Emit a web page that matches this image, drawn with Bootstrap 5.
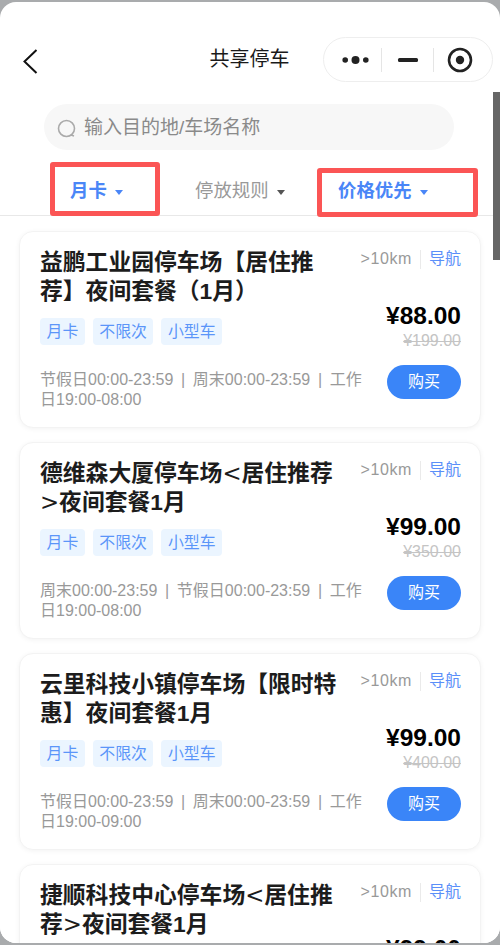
<!doctype html>
<html lang="zh"><head><meta charset="utf-8"><title>共享停车</title>
<link href="https://cdn.jsdelivr.net/npm/bootstrap@5.3.0/dist/css/bootstrap.min.css" rel="stylesheet">
<style>
html,body{height:945px;overflow:hidden;margin:0;background:#a9abad}
body{font-family:"Liberation Sans","Noto Sans CJK SC",sans-serif;padding-top:2px}
.phone{height:941px;background:#fff;border-radius:16px;overflow:hidden;position:relative}
.topbar{height:91px;padding:46px 7px 0 20px}
.back-ic{width:20px;height:28px}
.page-title{position:absolute;left:0;right:0;top:43px;text-align:center;font-size:20px;line-height:28px;color:#1a1a1a;margin-left:-1px}
.capsule{width:170px;height:45px;margin-top:-11px;border:1px solid #eee;border-radius:23px;background:#fff;position:relative;z-index:1}
.cap-cell{height:100%}
.cap-a{width:57px;padding-left:18px}
.cap-b{width:52px;justify-content:center}
.cap-c{width:58px;padding-left:13px}
.cap-sep{width:1px;height:24px;background:#e5e5e5}
.searchbox{height:46px;margin:11px 46px 0 44px;background:#f7f7f7;border-radius:23px;padding:3px 0 0 13px;color:#8a8a8a;font-size:19px;gap:7px}
.tabs-row{height:66px;border-bottom:1px solid #e8e8e8;position:relative}
.tab-item{position:absolute;top:27px;height:28px;display:flex;align-items:center;font-size:18.4px;color:#999;white-space:nowrap;line-height:28px}
.tab-on{color:#4a86f7;font-weight:700}
.tri{display:inline-block;width:0;height:0;border-left:4px solid transparent;border-right:4px solid transparent;border-top:5px solid #555;margin-left:8px;margin-top:3px}
.tab-on .tri{border-top-color:#4a86f7}
.redbox{position:absolute;border:5px solid #fb5555;border-radius:3px;pointer-events:none}
.box-a{left:50px;top:12px;width:110px;height:54px}
.box-b{left:317px;top:18px;width:161px;height:49px}
.pos-a{left:70px}.pos-b{left:195px}.pos-c{left:338px}
.list-wrap{padding:15px 19px 0 19px;background:#fff}
.lot{height:197px;border:1px solid #f3f3f3;border-radius:14px;background:#fff;box-shadow:0 1px 5px rgba(0,0,0,.05);margin-bottom:14px;padding:17px 19px 0 20px}
.lot-title{width:297px;font-size:22.8px;line-height:29px;font-weight:700;color:#1c1c1c;height:58px;margin:-1px 0 1px}
.ang{font-family:"DejaVu Sans",sans-serif;font-weight:400}
.dist{font-size:16px;line-height:20px;color:#999;white-space:nowrap;height:20px}
.dist-num{letter-spacing:.6px}
.dist-sep{width:1px;height:19px;background:#eaeaea;margin:0 8px}
.nav-link-txt{color:#5b8ff9}
.price{font-size:24.5px;line-height:30px;font-weight:700;color:#000;text-align:right;margin-top:-6px}
.old-price{font-size:16px;line-height:20px;color:#c4c4c4;text-decoration:line-through;text-align:right}
.tag-row{gap:8px;margin-top:11px}
.tag-pill{height:27px;line-height:27px;padding:0 6.5px;background:#ebf5ff;color:#5b95f9;border-radius:4px;font-size:15.9px}
.hours{width:327px;font-size:16px;line-height:20px;color:#999;margin-top:25px;word-spacing:3.2px}
.buy-btn{width:74px;height:34px;padding:0;border:0;border-radius:17px;background:#3a85f8;color:#fff;font-size:16px;line-height:34px;margin-top:14px}
.scroll-thumb{position:absolute;right:0;top:90px;width:7px;height:168px;background:#666}
</style></head><body>
<div class="phone">
 <div class="topbar d-flex justify-content-between align-items-start">
  <svg class="back-ic" viewBox="0 0 20 28"><path d="M16.5 2 L4.5 13.5 L16.5 25" fill="none" stroke="#111" stroke-width="2"/></svg>
  <div class="page-title">共享停车</div>
  <div class="capsule d-flex align-items-center">
   <div class="cap-cell cap-a d-flex align-items-center"><svg width="27" height="10" viewBox="0 0 27 10"><circle cx="3.2" cy="5" r="2.8" fill="#222"/><circle cx="13.5" cy="5" r="4" fill="#222"/><circle cx="23.8" cy="5" r="2.8" fill="#222"/></svg></div>
   <div class="cap-sep"></div>
   <div class="cap-cell cap-b d-flex align-items-center"><svg width="22" height="6" viewBox="0 0 22 6"><rect x="1" y="1" width="20" height="4" rx="1.5" fill="#222"/></svg></div>
   <div class="cap-sep"></div>
   <div class="cap-cell cap-c d-flex align-items-center"><svg width="26" height="26" viewBox="0 0 26 26"><circle cx="13" cy="13" r="11" fill="none" stroke="#222" stroke-width="2.6"/><circle cx="13" cy="13" r="4.2" fill="#222"/></svg></div>
  </div>
 </div>
 <div class="searchbox d-flex align-items-center">
  <svg width="20" height="20" viewBox="0 0 20 20"><circle cx="9.5" cy="9.5" r="8" fill="none" stroke="#aaa" stroke-width="1.6"/><path d="M14 16 L17 17" stroke="#aaa" stroke-width="1.6" fill="none"/></svg>
  <span>输入目的地/车场名称</span>
 </div>
 <div class="tabs-row">
  <div class="tab-item tab-on pos-a">月卡<i class="tri"></i></div>
  <div class="tab-item pos-b">停放规则<i class="tri"></i></div>
  <div class="tab-item tab-on pos-c">价格优先<i class="tri"></i></div>
  <div class="redbox box-a"></div>
  <div class="redbox box-b"></div>
 </div>
 <div class="list-wrap">
  <div class="lot">
   <div class="d-flex justify-content-between align-items-start">
    <div class="lot-title">益鹏工业园停车场【居住推荐】夜间套餐（1月）</div>
    <div class="dist d-flex align-items-center"><span class="dist-num">&gt;10km</span><span class="dist-sep"></span><span class="nav-link-txt">导航</span></div>
   </div>
   <div class="d-flex justify-content-between">
    <div class="d-flex flex-column">
     <div class="d-flex tag-row"><span class="tag-pill">月卡</span><span class="tag-pill">不限次</span><span class="tag-pill">小型车</span></div>
     <div class="hours">节假日00:00-23:59 | 周末00:00-23:59 | 工作日19:00-08:00</div>
    </div>
    <div class="d-flex flex-column align-items-end">
     <div class="price">¥88.00</div><div class="old-price">¥199.00</div>
     <button class="btn buy-btn">购买</button>
    </div>
   </div>
  </div>
  <div class="lot">
   <div class="d-flex justify-content-between align-items-start">
    <div class="lot-title">德维森大厦停车场<span class="ang">&lt;</span>居住推荐<span class="ang">&gt;</span>夜间套餐1月</div>
    <div class="dist d-flex align-items-center"><span class="dist-num">&gt;10km</span><span class="dist-sep"></span><span class="nav-link-txt">导航</span></div>
   </div>
   <div class="d-flex justify-content-between">
    <div class="d-flex flex-column">
     <div class="d-flex tag-row"><span class="tag-pill">月卡</span><span class="tag-pill">不限次</span><span class="tag-pill">小型车</span></div>
     <div class="hours">周末00:00-23:59 | 节假日00:00-23:59 | 工作日19:00-08:00</div>
    </div>
    <div class="d-flex flex-column align-items-end">
     <div class="price">¥99.00</div><div class="old-price">¥350.00</div>
     <button class="btn buy-btn">购买</button>
    </div>
   </div>
  </div>
  <div class="lot">
   <div class="d-flex justify-content-between align-items-start">
    <div class="lot-title">云里科技小镇停车场【限时特惠】夜间套餐1月</div>
    <div class="dist d-flex align-items-center"><span class="dist-num">&gt;10km</span><span class="dist-sep"></span><span class="nav-link-txt">导航</span></div>
   </div>
   <div class="d-flex justify-content-between">
    <div class="d-flex flex-column">
     <div class="d-flex tag-row"><span class="tag-pill">月卡</span><span class="tag-pill">不限次</span><span class="tag-pill">小型车</span></div>
     <div class="hours">节假日00:00-23:59 | 周末00:00-23:59 | 工作日19:00-09:00</div>
    </div>
    <div class="d-flex flex-column align-items-end">
     <div class="price">¥99.00</div><div class="old-price">¥400.00</div>
     <button class="btn buy-btn">购买</button>
    </div>
   </div>
  </div>
  <div class="lot">
   <div class="d-flex justify-content-between align-items-start">
    <div class="lot-title">捷顺科技中心停车场<span class="ang">&lt;</span>居住推荐<span class="ang">&gt;</span>夜间套餐1月</div>
    <div class="dist d-flex align-items-center"><span class="dist-num">&gt;10km</span><span class="dist-sep"></span><span class="nav-link-txt">导航</span></div>
   </div>
   <div class="d-flex justify-content-end">
    <div class="price">¥99.00</div>
   </div>
  </div>
 </div>
 <div class="scroll-thumb"></div>
</div>
<script src="https://cdn.jsdelivr.net/npm/bootstrap@5.3.0/dist/js/bootstrap.bundle.min.js"></script>
</body></html>
